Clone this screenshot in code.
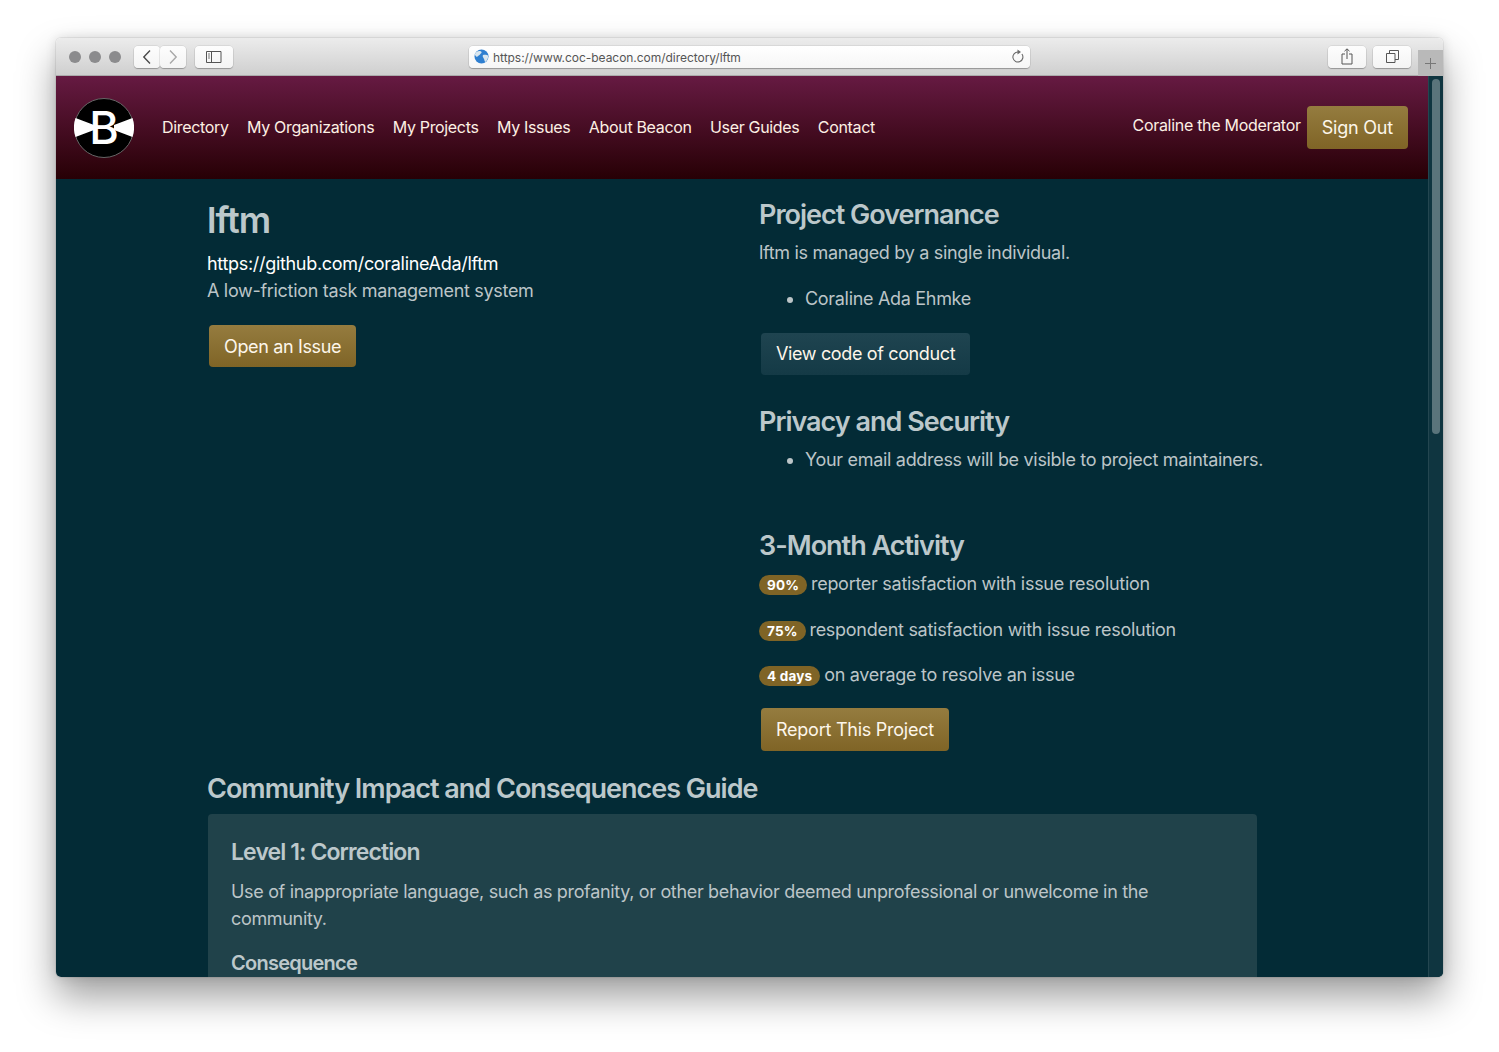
<div class="desktop">
  <div class="window">
    <header class="toolbar">
      <div class="lights"><i></i><i></i><i></i></div>
      <div class="navbtns">
        <button class="tb narrow" aria-label="Back"><svg width="10" height="16" viewBox="0 0 10 16"><path d="M8 1.500 1.800 8 8 14.500" fill="none" stroke="#4a4a4a" stroke-width="1.400"/></svg></button>
        <button class="tb narrow" aria-label="Forward"><svg width="10" height="16" viewBox="0 0 10 16"><path d="M2 1.500 8.200 8 2 14.500" fill="none" stroke="#a8a8a8" stroke-width="1.400"/></svg></button>
      </div>
      <button class="tb wide sidebar" aria-label="Sidebar"><svg width="16" height="12" viewBox="0 0 16 12"><path d="M.5.5h14.500v11H.5zM5.500.5v11" fill="none" stroke="#555" stroke-width="1"/><path d="M2 3h2M2 5h2M2 7h2" stroke="#777" stroke-width="1"/></svg></button>
      <div class="url">
        <svg class="globe" width="15" height="15" viewBox="0 0 15 15"><circle cx="7.500" cy="7.500" r="7" fill="#2f7fd0"/><path d="M3 2.500c2-1 4-.5 4.500.5s-1 1.500-1.500 2.500-2 1-2.500 2-2-.5-2.500-1.500.8-2.800 2-3.500zM9 6c1.500-.5 4-.5 5 .5.5 2-.5 4.500-2.500 6.500-1-.5-1-2-1.500-3S8 7 9 6z" fill="#d9e6ef"/></svg>
        <span class="addr">https://www.coc-beacon.com/directory/lftm</span>
        <svg class="reload" width="14" height="15" viewBox="0 0 14 15"><path d="M10.900 5A5 5 0 1 1 7 3" fill="none" stroke="#6b6b6b" stroke-width="1.100"/><path d="M6.500.5 10 3 6.500 5.500z" fill="#6b6b6b"/></svg>
      </div>
      <button class="tb wide" aria-label="Share"><svg width="12" height="17" viewBox="0 0 12 17"><path d="M4 6H1v10h10V6H8M6 11V1M3.500 3.200 6 .8l2.500 2.400" fill="none" stroke="#555" stroke-width="1"/></svg></button>
      <button class="tb wide tabs" aria-label="Tabs"><svg width="13" height="13" viewBox="0 0 13 13"><path d="M.5 3.500h8.500v9H.5zM3.500 3.500v-3h9v9H9" fill="none" stroke="#555" stroke-width="1"/></svg></button>
      <div class="newtab"><svg width="13" height="13" viewBox="0 0 13 13"><path d="M6.500 1v11M1 6.500h11" stroke="#777" stroke-width="1"/></svg></div>
    </header>
    <div class="viewport">
      <div class="page">
        <nav class="topnav">
          <svg class="logo" width="60" height="60" viewBox="0 0 60 60">
            <circle cx="30" cy="30" r="29.500" fill="#000" stroke="#666" stroke-width="1"/>
            <path d="M1.500 20 20 27V32L1.500 39a30 30 0 0 1 0-19zM58.500 20 40 27V32L58.500 39a30 30 0 0 0 0-19z" fill="#fff"/>
            <text class="logob" x="30" y="45.500" text-anchor="middle">B</text>
          </svg>
          <ul class="links">
            <li>Directory</li><li>My Organizations</li><li>My Projects</li><li>My Issues</li><li>About Beacon</li><li>User Guides</li><li>Contact</li>
          </ul>
          <span class="user">Coraline the Moderator</span>
          <span class="btn gold signout">Sign Out</span>
        </nav>
        <main class="container">
          <div class="cols">
            <section class="left">
              <h1>lftm</h1>
              <a class="repo" href="#top">https://github.com/coralineAda/lftm</a>
              <p class="tagline">A low-friction task management system</p>
              <span class="btn gold open">Open an Issue</span>
            </section>
            <section class="right">
              <h2>Project Governance</h2>
              <p class="gov">lftm is managed by a single individual.</p>
              <ul class="list first"><li>Coraline Ada Ehmke</li></ul>
              <span class="btn teal">View code of conduct</span>
              <h2 class="privacy">Privacy and Security</h2>
              <ul class="list second"><li>Your email address will be visible to project maintainers.</li></ul>
              <h2 class="activity">3-Month Activity</h2>
              <p class="stat"><span class="badge">90%</span> reporter satisfaction with issue resolution</p>
              <p class="stat"><span class="badge">75%</span> respondent satisfaction with issue resolution</p>
              <p class="stat"><span class="badge">4 days</span> on average to resolve an issue</p>
              <span class="btn gold report">Report This Project</span>
            </section>
          </div>
          <h2 class="guide">Community Impact and Consequences Guide</h2>
          <div class="card">
            <h3>Level 1: Correction</h3>
            <p>Use of inappropriate language, such as profanity, or other behavior deemed unprofessional or unwelcome in the community.</p>
            <h4>Consequence</h4>
          </div>
        </main>
      </div>
      <div class="scrollbar"><div class="thumb"></div></div>
    </div>
  </div>
</div>

<style>
  :global(body) { margin: 0; background: #fff; }
  .desktop { height: 1052px; box-sizing: border-box; padding: 38px 56px 0; overflow: hidden; font-family: Inter, "Liberation Sans", sans-serif; }
  .window { height: 939px; border-radius: 5px; overflow: hidden; display: flex; flex-direction: column; box-shadow: 0 20px 38px rgba(0,0,0,.38), 0 0 12px rgba(0,0,0,.12), 0 0 0 1px rgba(0,0,0,.06); }
  .toolbar { height: 38px; flex: none; box-sizing: border-box; display: flex; align-items: center; background: linear-gradient(#ececec, #cfcfcf); border-bottom: 1px solid #ababab; padding: 0 0 0 13px; }
  .lights { display: flex; gap: 8px; }
  .lights i { width: 12px; height: 12px; border-radius: 50%; background: #8b8b8d; }
  .navbtns { display: flex; margin-left: 13px; }
  button.tb { padding: 0; border: 0; height: 22px; flex: none; background: linear-gradient(#fdfdfd, #f4f4f4); border-radius: 4px; box-shadow: 0 1px 1px rgba(0,0,0,.25), 0 0 0 .5px rgba(0,0,0,.12); display: flex; align-items: center; justify-content: center; }
  .narrow { width: 26px; }
  .wide { width: 38px; }
  .sidebar { margin-left: 9px; }
  .tabs { margin-left: 7px; margin-right: 7px; }
  .url { margin-left: 236px; margin-right: 298px; width: 561px; height: 22px; flex: none; box-sizing: border-box; background: linear-gradient(#fff, #f6f6f6); border-radius: 4px; box-shadow: 0 1px 1px rgba(0,0,0,.25), 0 0 0 .5px rgba(0,0,0,.12); display: flex; align-items: center; padding: 0 5px; font-size: 12px; letter-spacing: -.04px; color: #555; }
  .addr { margin-left: 4px; flex: 1; padding-top: 1px; }
  .newtab { width: 25px; height: 26px; flex: none; align-self: flex-end; margin-bottom: -1px; background: #b9b9b9; display: flex; align-items: center; justify-content: center; }
  .viewport { flex: 1; display: flex; min-height: 0; background: #032b36; }
  .page { flex: 1; min-width: 0; }
  .topnav { height: 103px; display: flex; align-items: center; padding: 0 20px 0 18px; background: linear-gradient(#661a42, #270005); color: #fdf0e4; font-size: 16px; letter-spacing: -.33px; }
  .logo { flex: none; margin-top: 1px; }
  .logob { font-size: 45px; font-weight: 500; fill: #fff; letter-spacing: 0; }
  .links { display: flex; gap: 18.400px; list-style: none; margin: -2px 0 0 28px; padding: 0; flex: 1; }
  .user { margin-right: 6px; margin-top: -5px; letter-spacing: -.3px; }
  .btn { display: inline-block; box-sizing: border-box; height: 42px; line-height: 43px; padding: 0 15px; font-size: 18px; border-radius: 4px; color: #fdf6ea; letter-spacing: -.36px; }
  .gold { background: linear-gradient(#957c3f, #7f6426); }
  .teal { background: linear-gradient(#1f4450, #143a46); }
  .signout { height: 43px; letter-spacing: -.2px; }
  .container { width: 1050px; margin-left: 151px; font-size: 18px; line-height: 27px; letter-spacing: -.31px; color: #bcc5c8; }
  .cols { display: flex; }
  .left { width: 552px; flex: none; }
  .right { flex: 1; margin-right: -15px; }
  h1, h2, h3, h4, p, ul { margin: 0; }
  h1, h2, h3, h4 { font-weight: 600; color: #bcc8cb; }
  h1 { font-size: 36px; line-height: 43px; margin-top: 20px; letter-spacing: -1px; }
  .repo { display: block; color: #fff; text-decoration: none; margin-top: 8px; }
  .open { margin: 21px 0 0 2px; }
  h2 { font-size: 27px; line-height: 32px; margin-top: 20px; letter-spacing: -1px; }
  .gov { margin-top: 8px; }
  .list { padding-left: 46px; }
  .first { margin-top: 19px; }
  .teal { margin: 21px 0 0 2px; display: block; width: fit-content; line-height: 41px; }
  h2.privacy { margin-top: 31px; }
  .second { margin-top: 8px; }
  h2.activity { margin-top: 57px; }
  .stat { margin-top: 8px; margin-bottom: 18.500px; letter-spacing: -.28px; }
  .stat + .stat { margin-top: 0; }
  .badge { display: inline-block; background: #7f6426; color: #fff; font-size: 13.500px; font-weight: 700; letter-spacing: .2px; line-height: 20px; padding: 0 8px; margin-right: -1px; border-radius: 10px; vertical-align: 0; }
  .report { display: block; width: fit-content; margin: 19.500px 0 0 2px; height: 43px; letter-spacing: -.25px; }
  h2.guide { margin-top: 22px; }
  .card { margin: 9px 0 0 1px; background: #20424a; border-radius: 4px; padding: 22px 23px 40px; }
  h3 { font-size: 23px; line-height: 32px; letter-spacing: -.9px; }
  .card p { margin-top: 10px; letter-spacing: -.33px; }
  h4 { font-size: 20px; line-height: 27px; margin-top: 18px; letter-spacing: -.75px; }
  .scrollbar { width: 15px; flex: none; background: #0f3540; border-left: 1px solid #234650; box-sizing: border-box; padding: 3px 3px 0 3px; }
  .thumb { height: 355px; border-radius: 4px; background: #5a747b; }
</style>
